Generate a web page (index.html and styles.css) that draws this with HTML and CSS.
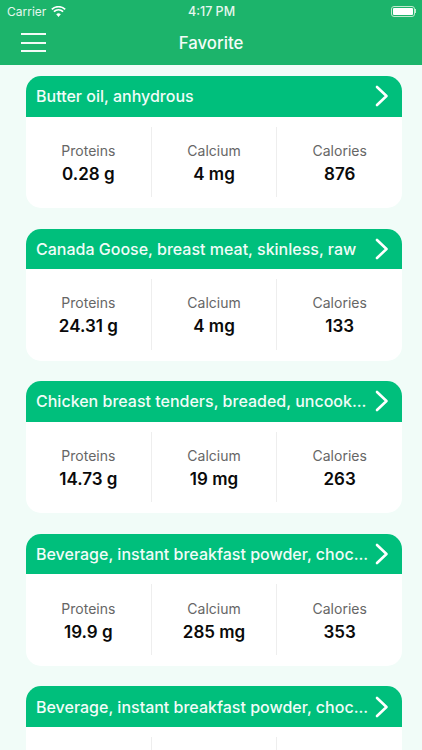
FILE: index.html
```html
<html>

<head>
    <meta http-equiv="Content-Type" content="text/html;charset=utf-8">
    <link rel="stylesheet" href="styles.css">
</head>

<body>
    <div id="main">
        <div id="topbar">
            <div class="status">
                <div class="status-left">
                    <span>Carrier</span>
                    <svg class="wifi" width="15" height="11" viewBox="0 0 15 11">
                        <path d="M7.5 11 L5.2 8.3 A3.4 3.4 0 0 1 9.8 8.3 Z" fill="#fff"/>
                        <path d="M2.9 5.6 A7 7 0 0 1 12.1 5.6" fill="none" stroke="#fff" stroke-width="1.7"/>
                        <path d="M0.8 3.3 A10 10 0 0 1 14.2 3.3" fill="none" stroke="#fff" stroke-width="1.7"/>
                    </svg>
                </div>
                <div class="status-time">4:17 PM</div>
                <div class="status-right">
                    <div class="battery"><div class="battery-fill"></div></div>
                    <div class="battery-tip"></div>
                </div>
            </div>
            <div class="nav">
                <div class="burger"><i></i><i></i><i></i></div>
                <div class="nav-title">Favorite</div>
            </div>
        </div>

        <div id="list">
            <div class="card">
                <div class="card-head">
                    <div class="card-title">Butter oil, anhydrous</div>
                    <svg class="chevron" width="14" height="22" viewBox="0 0 14 22"><path d="M2 2 L11.5 11 L2 20" fill="none" stroke="#fff" stroke-width="2.6" stroke-linecap="round" stroke-linejoin="round"/></svg>
                </div>
                <div class="card-body">
                    <div class="stat"><div class="stat-label">Proteins</div><div class="stat-value">0.28 g</div></div>
                    <div class="stat"><div class="stat-label">Calcium</div><div class="stat-value">4 mg</div></div>
                    <div class="stat"><div class="stat-label">Calories</div><div class="stat-value">876</div></div>
                </div>
            </div>

            <div class="card">
                <div class="card-head">
                    <div class="card-title">Canada Goose, breast meat, skinless, raw</div>
                    <svg class="chevron" width="14" height="22" viewBox="0 0 14 22"><path d="M2 2 L11.5 11 L2 20" fill="none" stroke="#fff" stroke-width="2.6" stroke-linecap="round" stroke-linejoin="round"/></svg>
                </div>
                <div class="card-body">
                    <div class="stat"><div class="stat-label">Proteins</div><div class="stat-value">24.31 g</div></div>
                    <div class="stat"><div class="stat-label">Calcium</div><div class="stat-value">4 mg</div></div>
                    <div class="stat"><div class="stat-label">Calories</div><div class="stat-value">133</div></div>
                </div>
            </div>

            <div class="card">
                <div class="card-head">
                    <div class="card-title">Chicken breast tenders, breaded, uncook...</div>
                    <svg class="chevron" width="14" height="22" viewBox="0 0 14 22"><path d="M2 2 L11.5 11 L2 20" fill="none" stroke="#fff" stroke-width="2.6" stroke-linecap="round" stroke-linejoin="round"/></svg>
                </div>
                <div class="card-body">
                    <div class="stat"><div class="stat-label">Proteins</div><div class="stat-value">14.73 g</div></div>
                    <div class="stat"><div class="stat-label">Calcium</div><div class="stat-value">19 mg</div></div>
                    <div class="stat"><div class="stat-label">Calories</div><div class="stat-value">263</div></div>
                </div>
            </div>

            <div class="card">
                <div class="card-head">
                    <div class="card-title">Beverage, instant breakfast powder, choc...</div>
                    <svg class="chevron" width="14" height="22" viewBox="0 0 14 22"><path d="M2 2 L11.5 11 L2 20" fill="none" stroke="#fff" stroke-width="2.6" stroke-linecap="round" stroke-linejoin="round"/></svg>
                </div>
                <div class="card-body">
                    <div class="stat"><div class="stat-label">Proteins</div><div class="stat-value">19.9 g</div></div>
                    <div class="stat"><div class="stat-label">Calcium</div><div class="stat-value">285 mg</div></div>
                    <div class="stat"><div class="stat-label">Calories</div><div class="stat-value">353</div></div>
                </div>
            </div>

            <div class="card">
                <div class="card-head">
                    <div class="card-title">Beverage, instant breakfast powder, choc...</div>
                    <svg class="chevron" width="14" height="22" viewBox="0 0 14 22"><path d="M2 2 L11.5 11 L2 20" fill="none" stroke="#fff" stroke-width="2.6" stroke-linecap="round" stroke-linejoin="round"/></svg>
                </div>
                <div class="card-body">
                    <div class="stat"></div>
                    <div class="stat"></div>
                    <div class="stat"></div>
                </div>
            </div>
        </div>
    </div>
</body>

</html>
```

FILE: styles.css
```css
html, body {
    margin: 0;
    padding: 0;
    height: 100%;
    overflow: hidden;
}

#main {
    width: 422px;
    height: 750px;
    overflow: hidden;
    background-color: #f1fcf8;
    font-family: Inter, "Noto Sans", "Liberation Sans", sans-serif;
}

#topbar {
    height: 65px;
    background-color: #1cb46b;
    color: #fff;
}

.status {
    height: 22px;
    display: grid;
    grid-template-columns: 1fr auto 1fr;
    align-items: center;
    padding: 0 6px 0 7px;
    font-size: 12px;
}

.status-left {
    display: flex;
    align-items: center;
    gap: 5px;
    color: #e6f7ee;
}

.status-time {
    font-size: 12.5px;
    font-weight: 500;
    color: #e6f7ee;
}

.status-right {
    display: flex;
    align-items: center;
    justify-content: flex-end;
}

.battery {
    width: 24px;
    height: 11px;
    box-sizing: border-box;
    border: 1px solid #bfeacd;
    border-radius: 3px;
    padding: 1px;
}

.battery-fill {
    height: 100%;
    background-color: #fff;
    border-radius: 1px;
}

.battery-tip {
    width: 1px;
    height: 4px;
    background-color: #bfeacd;
}

.nav {
    height: 41px;
    display: flex;
    align-items: center;
    justify-content: center;
    position: relative;
}

.burger {
    position: absolute;
    left: 21px;
    top: 11px;
    width: 25px;
    height: 19px;
    display: flex;
    flex-direction: column;
    justify-content: space-between;
}

.burger i {
    display: block;
    height: 2px;
    background-color: #f2fbf6;
}

.nav-title {
    font-size: 16.8px;
    font-weight: 500;
    color: #f4fcf8;
}

#list {
    padding: 11px 20px 0 26px;
}

.card {
    background-color: #fff;
    border-radius: 15px;
    overflow: hidden;
    margin-bottom: 20.6px;
}

.card-head {
    height: 40.5px;
    padding: 0 13px 0 10px;
    display: flex;
    align-items: center;
    justify-content: space-between;
    background-color: #00bf7c;
    color: #f1fcf8;
}

.card-title {
    font-size: 16px;
    font-weight: 500;
    white-space: nowrap;
    width: 335px;
}

.chevron {
    flex: none;
}

.card-body {
    height: 91.5px;
    box-sizing: border-box;
    padding: 10px 0 11px;
    display: flex;
}

.stat {
    flex: 1;
    display: flex;
    flex-direction: column;
    align-items: center;
    justify-content: center;
    gap: 5px;
    padding-top: 2px;
    border-left: 1px solid #eeeeee;
}

.stat:first-child {
    border-left: 0;
}

.stat-label {
    font-size: 14px;
    color: #666;
}

.stat-value {
    font-size: 17px;
    font-weight: 600;
    color: #0a0a0a;
}
```
